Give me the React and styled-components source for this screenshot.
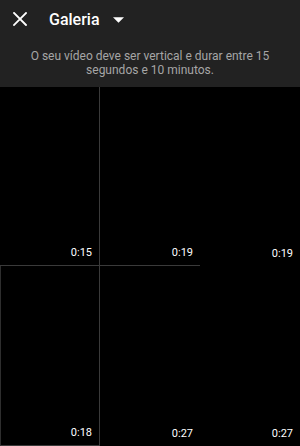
import React from "react";
import styled, { createGlobalStyle } from "styled-components";

const clips = [
  { time: "0:15", framed: true },
  { time: "0:19", framed: true },
  { time: "0:19", framed: false },
  { time: "0:18", framed: true, left: true },
  { time: "0:27", framed: false },
  { time: "0:27", framed: false },
];

const App = () => {
  return (
    <>
      <GlobalStyle />
      <Screen>
        <Header>
          <TopBar>
            <CloseButton aria-label="Fechar">
              <svg width="14" height="14" viewBox="0 0 14 14">
                <path d="M1 1 L13 13 M13 1 L1 13" stroke="#fff" strokeWidth="1.8" strokeLinecap="square" />
              </svg>
            </CloseButton>
            <Title>Galeria</Title>
            <Caret viewBox="0 0 12 6" width="11" height="6">
              <path d="M0 0 L12 0 L6 6 Z" fill="#fff" />
            </Caret>
          </TopBar>
          <Hint>O seu vídeo deve ser vertical e durar entre 15 segundos e 10 minutos.</Hint>
        </Header>
        <Grid>
          {clips.map((c, i) => (
            <Tile key={i} $framed={c.framed} $left={c.left}>
              <Duration>{c.time}</Duration>
            </Tile>
          ))}
        </Grid>
      </Screen>
    </>
  );
};

export default App;

const GlobalStyle = createGlobalStyle`
  body {
    margin: 0;
    background: #000;
    font-family: Roboto, "Liberation Sans", sans-serif;
  }
`;

const Screen = styled.div`
  width: 300px;
  height: 446px;
  overflow: hidden;
  background: #000;
  display: flex;
  flex-direction: column;
`;

const Header = styled.div`
  background: #222222;
  height: 87px;
  box-sizing: border-box;
`;

const TopBar = styled.div`
  height: 38px;
  display: flex;
  align-items: center;
  padding-left: 13px;
`;

const CloseButton = styled.div`
  width: 14px;
  height: 14px;
  display: flex;
  margin-right: 22px;
`;

const Title = styled.span`
  color: #fff;
  font-size: 16px;
  font-weight: 500;
`;

const Caret = styled.svg`
  margin-left: 13px;
  margin-top: 1px;
`;

const Hint = styled.p`
  margin: 11px 0 0;
  padding: 0 30px;
  text-align: center;
  color: #a6a6a6;
  font-size: 12px;
  line-height: 14px;
`;

const Grid = styled.div`
  flex: 1;
  display: grid;
  grid-template-columns: 100px 100px 100px;
  grid-template-rows: 179px 180px;
`;

const Tile = styled.div`
  position: relative;
  background: #000;
  box-sizing: border-box;
  border-bottom: ${(p) => (p.$framed ? "1px solid #3a3a3a" : "none")};
  border-left: ${(p) => (p.$left ? "1px solid #2e2e2e" : "none")};
  border-right: ${(p) => (p.$framed || p.$left ? "1px solid #3a3a3a" : "none")};

  &:nth-child(1) {
    border-right: 1px solid #3a3a3a;
  }
  &:nth-child(2) {
    border-right: none;
  }
`;

const Duration = styled.span`
  position: absolute;
  right: 7px;
  bottom: 6px;
  color: #fff;
  font-size: 11px;
  line-height: 13px;
`;
